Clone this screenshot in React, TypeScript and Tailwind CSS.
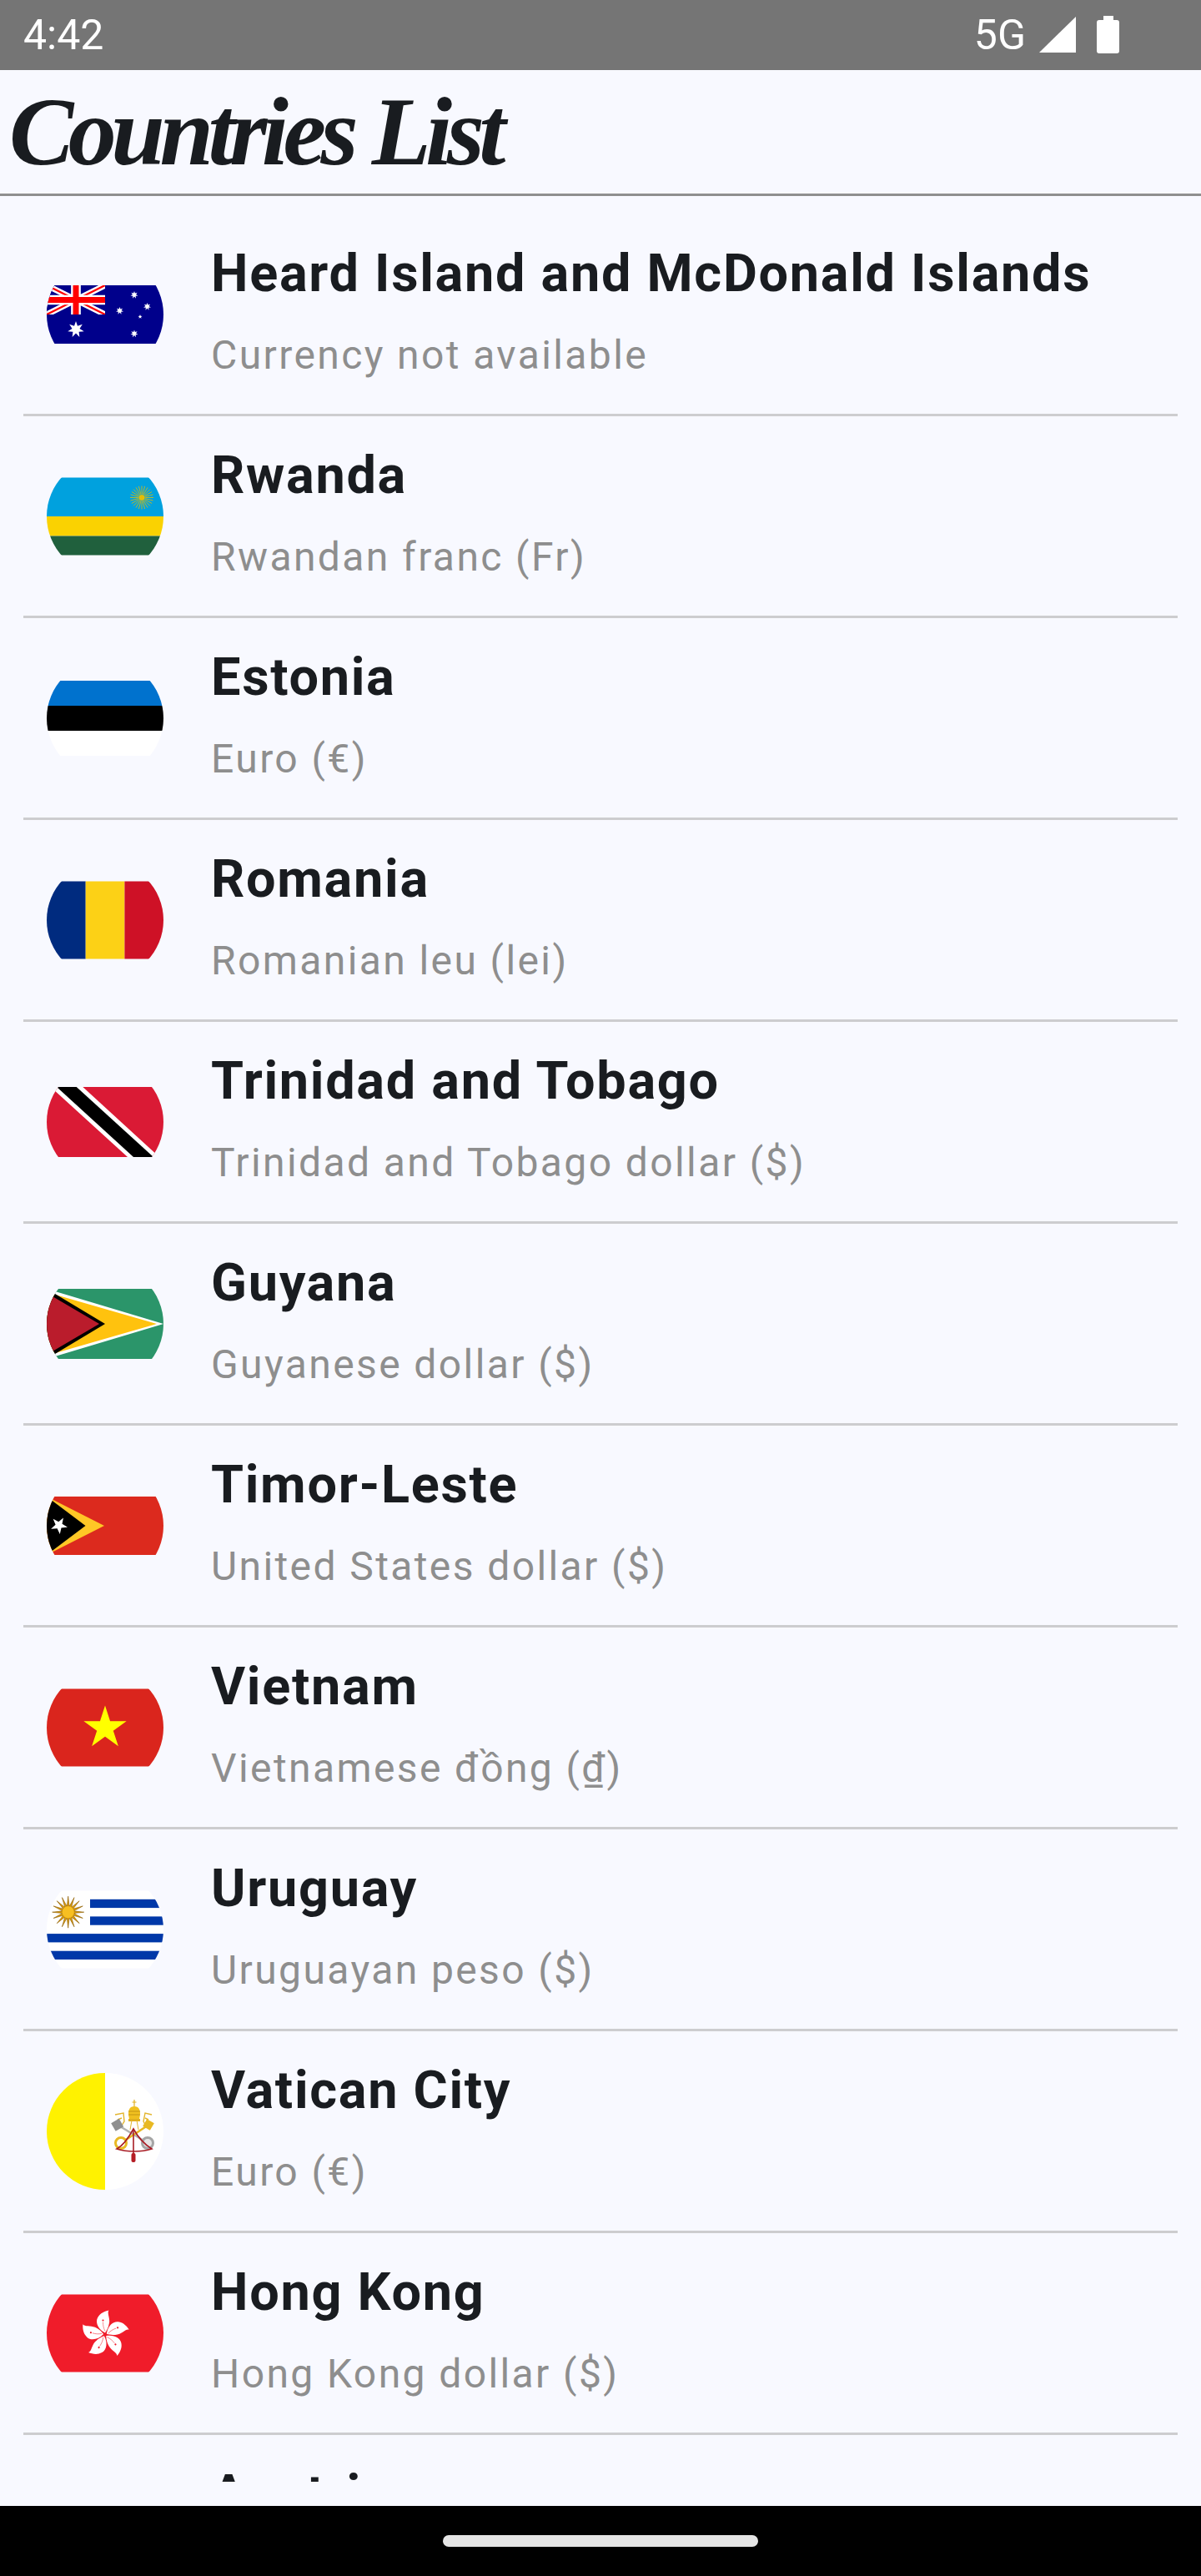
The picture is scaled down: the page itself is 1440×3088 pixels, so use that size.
import React from "react";

function starPoints(cx: number, cy: number, r: number, inner: number, n: number, rot = -90) {
  const pts: string[] = [];
  for (let i = 0; i < n * 2; i++) {
    const a = ((rot + (i * 180) / n) * Math.PI) / 180;
    const rad = i % 2 === 0 ? r : inner;
    pts.push(`${(cx + rad * Math.cos(a)).toFixed(2)},${(cy + rad * Math.sin(a)).toFixed(2)}`);
  }
  return pts.join(" ");
}

function Rays({ cx, cy, r, r0, n, color, width }: { cx: number; cy: number; r: number; r0: number; n: number; color: string; width: number }) {
  return (
    <g stroke={color} strokeWidth={width}>
      {Array.from({ length: n }).map((_, i) => {
        const a = (i * 2 * Math.PI) / n;
        return <line key={i} x1={cx + r0 * Math.cos(a)} y1={cy + r0 * Math.sin(a)} x2={cx + r * Math.cos(a)} y2={cy + r * Math.sin(a)} />;
      })}
    </g>
  );
}

function FlagFrame({ h, children, id }: { h: number; children: React.ReactNode; id: string }) {
  const top = (140 - h) / 2;
  return (
    <svg width="140" height="140" viewBox="0 0 140 140" className="shrink-0 block">
      <defs>
        <clipPath id={id}>
          <circle cx="70" cy="70" r="70" />
        </clipPath>
      </defs>
      <g clipPath={`url(#${id})`}>
        <g transform={`translate(0 ${top})`}>{children}</g>
      </g>
    </svg>
  );
}

function Australia() {
  return (
    <FlagFrame h={70} id="au">
      <rect width="140" height="70" fill="#00008b" />
      <svg x="0" y="0" width="70" height="35" viewBox="0 0 60 30" preserveAspectRatio="none">
        <rect width="60" height="30" fill="#00008b" />
        <path d="M0,0 L60,30 M60,0 L0,30" stroke="#fff" strokeWidth="6" />
        <path d="M0,0 L30,15 M60,0 L30,15 M30,15 L60,30 M30,15 L0,30" stroke="#ff0000" strokeWidth="2" />
        <path d="M30,0 V30 M0,15 H60" stroke="#fff" strokeWidth="10" />
        <path d="M30,0 V30 M0,15 H60" stroke="#ff0000" strokeWidth="6" />
      </svg>
      <polygon points={starPoints(35, 53, 10, 4.6, 7)} fill="#fff" />
      <polygon points={starPoints(105, 11.5, 4.6, 2.1, 7)} fill="#fff" />
      <polygon points={starPoints(120.5, 25.5, 4.6, 2.1, 7)} fill="#fff" />
      <polygon points={starPoints(87.5, 30.5, 4.6, 2.1, 7)} fill="#fff" />
      <polygon points={starPoints(112, 37.7, 2.6, 1.1, 5)} fill="#fff" />
      <polygon points={starPoints(105, 58, 4.6, 2.1, 7)} fill="#fff" />
    </FlagFrame>
  );
}

function Rwanda() {
  return (
    <FlagFrame h={93} id="rw">
      <rect width="140" height="46.5" fill="#00a1de" />
      <rect y="46.5" width="140" height="23.5" fill="#fad201" />
      <rect y="70" width="140" height="23" fill="#20603d" />
      <Rays cx={114} cy={24} r={14} r0={3} n={24} color="#e5be01" width={0.8} />
      <circle cx="114" cy="24" r="4" fill="#e5be01" stroke="#00a1de" strokeWidth="0.6" />
    </FlagFrame>
  );
}

function Estonia() {
  return (
    <FlagFrame h={90} id="ee">
      <rect width="140" height="30" fill="#0072ce" />
      <rect y="30" width="140" height="30" fill="#000" />
      <rect y="60" width="140" height="30" fill="#fff" />
    </FlagFrame>
  );
}

function Romania() {
  return (
    <FlagFrame h={93} id="ro">
      <rect width="46.7" height="93" fill="#002b7f" />
      <rect x="46.7" width="46.7" height="93" fill="#fcd116" />
      <rect x="93.4" width="46.6" height="93" fill="#ce1126" />
    </FlagFrame>
  );
}

function Trinidad() {
  return (
    <FlagFrame h={84} id="tt">
      <rect width="140" height="84" fill="#da1a35" />
      <polygon points="4.7,0 43.3,0 135,84 97,84" fill="#fff" />
      <polygon points="12,0 35.7,0 128,84 104,84" fill="#000" />
    </FlagFrame>
  );
}

function Guyana() {
  return (
    <FlagFrame h={84} id="gy">
      <rect width="140" height="84" fill="#2b956a" />
      <polygon points="0,0 140,42 0,84" fill="#fff" />
      <polygon points="0,4 132,42 0,80" fill="#ffc20e" />
      <polygon points="0,0 70,42 0,84" fill="#000" />
      <polygon points="0,5 63,42 0,79" fill="#ba1c2c" />
    </FlagFrame>
  );
}

function TimorLeste() {
  return (
    <FlagFrame h={70} id="tl">
      <rect width="140" height="70" fill="#dc2a1e" />
      <polygon points="0,0 69,35 0,70" fill="#ffc726" />
      <polygon points="0,0 46.5,35 0,70" fill="#000" />
      <polygon points={starPoints(14.7, 34.5, 10.5, 4.2, 5, -60)} fill="#fff" />
    </FlagFrame>
  );
}

function Vietnam() {
  return (
    <FlagFrame h={93} id="vn">
      <rect width="140" height="93" fill="#da251d" />
      <polygon points={starPoints(70, 47, 27, 10.3, 5)} fill="#ffff00" />
    </FlagFrame>
  );
}

function Uruguay() {
  return (
    <FlagFrame h={93} id="uy">
      <rect width="140" height="93" fill="#fff" />
      <rect x="52" y="10.3" width="88" height="10.3" fill="#0038a8" />
      <rect x="52" y="30.9" width="88" height="10.3" fill="#0038a8" />
      <rect y="51.6" width="140" height="10.3" fill="#0038a8" />
      <rect y="72.2" width="140" height="10.3" fill="#0038a8" />
      <polygon points={starPoints(25.7, 25.7, 19, 7, 16)} fill="#d99a0b" stroke="#8a5a00" strokeWidth="0.6" />
      <circle cx="25.7" cy="25.7" r="7.5" fill="#f7bf22" stroke="#b87f08" strokeWidth="0.5" />
    </FlagFrame>
  );
}

function Vatican() {
  return (
    <FlagFrame h={140} id="va">
      <rect width="70" height="140" fill="#fff200" />
      <rect x="70" width="70" height="140" fill="#fff" />
      <g transform="translate(104 70)">
        <path d="M-21,-9 L17,14" stroke="#b3b3b3" strokeWidth="2.6" />
        <path d="M20,-9 L-15,14" stroke="#e8b923" strokeWidth="2.6" />
        <path d="M-22,-20 L-12,-22 L-11,-12 L-16,-4 M-19,-14 L-14,-16" stroke="#e3b52c" strokeWidth="1.4" fill="none" />
        <path d="M22,-20 L14,-22 L12,-12 L15,-6 M18,-14 L14,-16" stroke="#e3b52c" strokeWidth="1.4" fill="none" />
        <rect x="-25" y="-13" width="11" height="11" fill="#8f8f8f" transform="rotate(-30 -20 -8)" />
        <rect x="13" y="-13" width="10" height="10" fill="#e8b923" transform="rotate(30 18 -8)" />
        <circle cx="-15" cy="14" r="6.5" fill="#fff" stroke="#e8b923" strokeWidth="3" />
        <circle cx="17" cy="14" r="6.5" fill="#e6e6e6" stroke="#a5a5a5" strokeWidth="3" />
        <path d="M-5,-15 C-8,-26 -4,-30 1,-30 C6,-30 10,-26 7,-15 Z" fill="#f0c020" />
        <path d="M-6,-24 H8 M-6,-20 H8" stroke="#b98a10" strokeWidth="0.8" />
        <rect x="-6" y="-15" width="14" height="3" fill="#e0b020" />
        <path d="M1,-38 V-30 M-1.5,-35 H3.5" stroke="#e0b020" strokeWidth="1.2" />
        <path d="M-2,-13 L-4,-2 M4,-13 L6,-2" stroke="#e3b52c" strokeWidth="1" />
        <path d="M0,-3 C-6,8 -14,18 -20,21 C-8,25 10,25 22,21 C14,16 6,8 0,-3 Z" fill="none" stroke="#a81c24" strokeWidth="1.6" />
        <path d="M0,-3 V28" stroke="#a81c24" strokeWidth="1.6" />
        <rect x="-2.5" y="26" width="5" height="11" rx="2" fill="#b51c24" />
      </g>
    </FlagFrame>
  );
}

function HongKong() {
  return (
    <FlagFrame h={93} id="hk">
      <rect width="140" height="93" fill="#f01c2a" />
      <g transform="translate(70 48)">
        {[0, 70, 142, 214, 286].map((r) => (
          <g key={r} transform={`rotate(${r})`}>
            <path d="M0,-2 C-8,-6 -12,-14 -9,-20 C-6,-26 0,-28 4.5,-29 C2,-26 6,-20 5,-14 C4,-8 2,-5 0,-2 Z" fill="#fff" />
            <circle cx="-2.5" cy="-17" r="1.1" fill="#f01c2a" />
            <path d="M0,-4 C-2,-8 -2.5,-11 -2.5,-15" stroke="#f01c2a" strokeWidth="0.5" fill="none" />
          </g>
        ))}
      </g>
    </FlagFrame>
  );
}

const rows: { name: string; sub: string; flag: React.ReactNode }[] = [
  { name: "Heard Island and McDonald Islands", sub: "Currency not available", flag: <Australia /> },
  { name: "Rwanda", sub: "Rwandan franc (Fr)", flag: <Rwanda /> },
  { name: "Estonia", sub: "Euro (€)", flag: <Estonia /> },
  { name: "Romania", sub: "Romanian leu (lei)", flag: <Romania /> },
  { name: "Trinidad and Tobago", sub: "Trinidad and Tobago dollar ($)", flag: <Trinidad /> },
  { name: "Guyana", sub: "Guyanese dollar ($)", flag: <Guyana /> },
  { name: "Timor-Leste", sub: "United States dollar ($)", flag: <TimorLeste /> },
  { name: "Vietnam", sub: "Vietnamese đồng (₫)", flag: <Vietnam /> },
  { name: "Uruguay", sub: "Uruguayan peso ($)", flag: <Uruguay /> },
  { name: "Vatican City", sub: "Euro (€)", flag: <Vatican /> },
  { name: "Hong Kong", sub: "Hong Kong dollar ($)", flag: <HongKong /> },
  { name: "Austria", sub: "Euro (€)", flag: null },
];

function Row({ name, sub, flag }: { name: string; sub: string; flag: React.ReactNode }) {
  return (
    <div className="mx-[28px] h-[242px] border-b-[3px] border-[#cdcdcf] flex items-center pl-[28px] gap-[57px]">
      {flag ?? <div className="w-[140px] h-[140px] shrink-0" />}
      <div className="flex flex-col self-start pt-[31px]">
        <div className="text-[63px] leading-[80px] font-bold tracking-[1.7px] text-[#191c20] whitespace-nowrap">{name}</div>
        <div className="mt-[26px] text-[48px] leading-[64px] tracking-[2.4px] text-[#8e8e8e] whitespace-nowrap">{sub}</div>
      </div>
    </div>
  );
}

export default function App() {
  return (
    <div className="w-[1440px] h-[3088px] overflow-hidden flex flex-col bg-[#f8f9ff] font-['Roboto',sans-serif]">
      <div className="h-[84px] shrink-0 bg-[#757575] flex items-center text-white text-[50px] leading-[84px]">
        <span className="ml-[28px]">4:42</span>
        <span className="ml-auto">5G</span>
        <svg width="44" height="43" viewBox="0 0 44 43" className="ml-[16px] mt-[-1px]">
          <polygon points="44,0 44,43 0,43" fill="#fff" />
        </svg>
        <svg width="27" height="45" viewBox="0 0 27 45" className="ml-[25px] mr-[98px] mt-[-1px]">
          <path d="M8,0 H20 V5 H24 A3,3 0 0 1 27,8 V42 A3,3 0 0 1 24,45 H3 A3,3 0 0 1 0,42 V8 A3,3 0 0 1 3,5 H8 Z" fill="#fff" />
        </svg>
      </div>
      <div className="h-[151px] shrink-0 border-b-[3px] border-[#8f8f8f] flex items-center pl-[11px]">
        <span className="font-['Liberation_Serif',serif] italic font-bold text-[116px] leading-[148px] tracking-[-6.5px] text-[#191c20] whitespace-nowrap">Countries List</span>
      </div>
      <div className="h-[2740px] shrink-0 overflow-hidden pt-[22px]">
        {rows.map((r) => (
          <Row key={r.name} name={r.name} sub={r.sub} flag={r.flag} />
        ))}
      </div>
      <div className="flex-1" />
      <div className="h-[84px] shrink-0 bg-black flex items-center justify-center">
        <div className="w-[378px] h-[14px] rounded-full bg-[#e5e5e5]" />
      </div>
    </div>
  );
}
